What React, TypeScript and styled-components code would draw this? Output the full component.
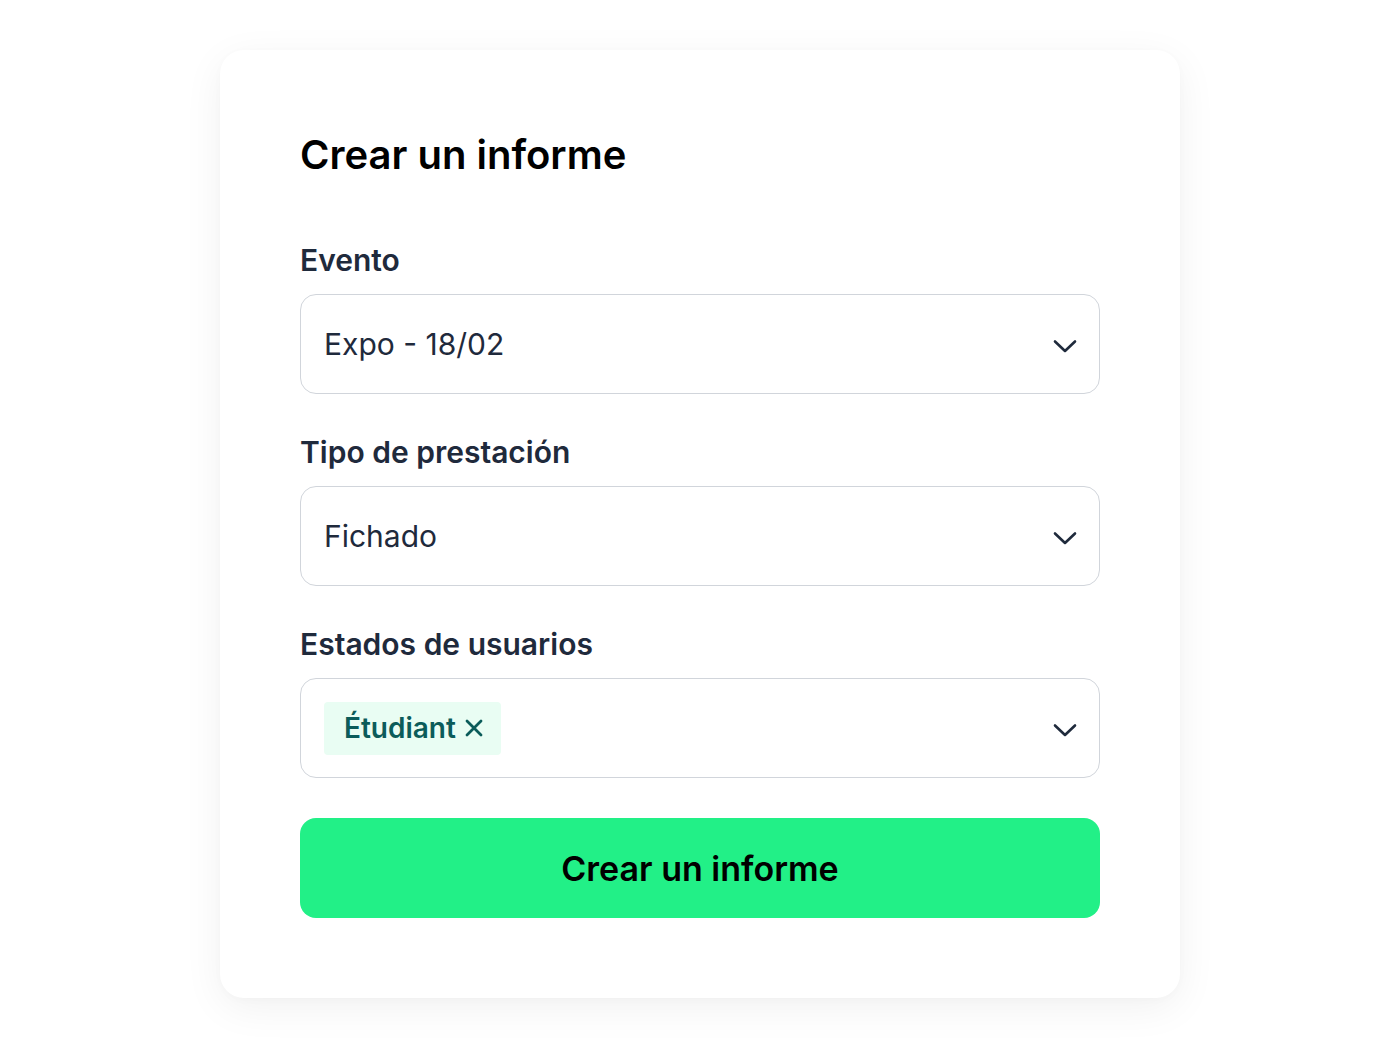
import * as React from "react";
import styled, { createGlobalStyle } from "styled-components";

const GlobalStyle = createGlobalStyle`
  html, body {
    margin: 0;
    padding: 0;
    background: #ffffff;
  }
  body {
    font-family: Inter, "Noto Sans", sans-serif;
  }
`;

const Page = styled.div`
  box-sizing: border-box;
  width: 1400px;
  height: 1048px;
  display: flex;
  align-items: center;
  justify-content: center;
`;

const Card = styled.div`
  box-sizing: border-box;
  width: 960px;
  height: 948px;
  padding: 80px 80px;
  background: #ffffff;
  border-radius: 24px;
  box-shadow: 0 10px 40px rgba(0, 0, 0, 0.06), 0 2px 10px rgba(0, 0, 0, 0.02);
  display: flex;
  flex-direction: column;
`;

const Title = styled.h1`
  margin: 0 0 62px;
  font-size: 40px;
  line-height: 50px;
  font-weight: 600;
  color: #000000;
`;

const Field = styled.div`
  display: flex;
  flex-direction: column;
  gap: 16px;
  margin-bottom: 40px;
`;

const Label = styled.label`
  font-size: 30px;
  line-height: 36px;
  font-weight: 600;
  color: #1f2a3c;
`;

const SelectBox = styled.div`
  box-sizing: border-box;
  height: 100px;
  padding: 0 22px 0 23px;
  border: 1px solid #d1d5db;
  border-radius: 16px;
  display: flex;
  align-items: center;
  justify-content: space-between;
`;

const Value = styled.span`
  font-size: 30px;
  font-weight: 400;
  color: #1f2a3c;
`;

const Tag = styled.span`
  display: inline-flex;
  align-items: center;
  gap: 9px;
  height: 53px;
  padding: 0 18px 0 20px;
  background: #e9fdf3;
  border-radius: 4px;
  font-size: 28px;
  font-weight: 600;
  color: #0b5c5a;
`;

const ChevronWrap = styled.span`
  display: flex;
  margin-top: 3px;
`;

const Submit = styled.button`
  box-sizing: border-box;
  height: 100px;
  border: none;
  border-radius: 16px;
  background: #22f087;
  font-family: Inter, "Noto Sans", sans-serif;
  font-size: 34px;
  font-weight: 600;
  color: #000000;
  cursor: pointer;
`;

function Chevron() {
  return (
    <ChevronWrap>
      <svg width="24" height="24" viewBox="0 0 24 24" fill="none">
        <path d="M2 7.5l10 9.5 10-9.5" stroke="#1f2a3c" strokeWidth="2.6" strokeLinecap="round" strokeLinejoin="round" />
      </svg>
    </ChevronWrap>
  );
}

function Cross() {
  return (
    <svg width="18" height="18" viewBox="0 0 18 18" fill="none">
      <path d="M2 2l14 14M16 2L2 16" stroke="#0b5c5a" strokeWidth="2.8" strokeLinecap="round" />
    </svg>
  );
}

export default function App() {
  return (
    <>
      <GlobalStyle />
      <Page>
        <Card>
          <Title>Crear un informe</Title>
          <Field>
            <Label>Evento</Label>
            <SelectBox>
              <Value>Expo - 18/02</Value>
              <Chevron />
            </SelectBox>
          </Field>
          <Field>
            <Label>Tipo de prestación</Label>
            <SelectBox>
              <Value>Fichado</Value>
              <Chevron />
            </SelectBox>
          </Field>
          <Field>
            <Label>Estados de usuarios</Label>
            <SelectBox>
              <Tag>
                Étudiant <Cross />
              </Tag>
              <Chevron />
            </SelectBox>
          </Field>
          <Submit>Crear un informe</Submit>
        </Card>
      </Page>
    </>
  );
}
